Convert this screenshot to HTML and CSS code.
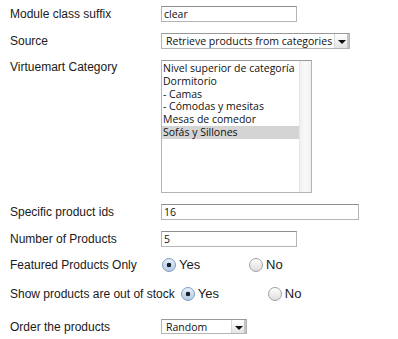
FILE: index.html
```html
<!DOCTYPE html>
<html lang="es">
  <head>
    <meta charset="UTF-8" />
    <meta name="viewport" content="width=device-width, initial-scale=1.0" />
    <title>Module parameters</title>
    <link rel="stylesheet" href="styles.css">
  </head>
  <body>
    <form class="params">
      <!-- Module class suffix -->
      <div class="row">
        <label class="key" for="suffix">Module class suffix</label>
        <input id="suffix" type="text" class="text-input short" value="clear" />
      </div>

      <!-- Source -->
      <div class="row">
        <label class="key" for="source">Source</label>
        <div class="select-box source">
          <select id="source">
            <option>Retrieve products from categories</option>
          </select>
          <span class="select-arrow"></span>
        </div>
      </div>

      <!-- Category list -->
      <div class="row row-top">
        <label class="key">Virtuemart Category</label>
        <div class="listbox">
          <ul class="list-items">
            <li>Nivel superior de categoría</li>
            <li>Dormitorio</li>
            <li>- Camas</li>
            <li>- Cómodas y mesitas</li>
            <li>Mesas de comedor</li>
            <li class="selected">Sofás y Sillones</li>
          </ul>
          <div class="list-track"></div>
        </div>
      </div>

      <div class="row">
        <label class="key" for="ids">Specific product ids</label>
        <input id="ids" type="text" class="text-input long" value="16" />
      </div>

      <div class="row">
        <label class="key" for="count">Number of Products</label>
        <input id="count" type="text" class="text-input short" value="5" />
      </div>

      <!-- Radio groups -->
      <div class="row radios featured">
        <span class="key">Featured Products Only</span>
        <label class="option"><input type="radio" name="featured" checked /> Yes</label>
        <label class="option"><input type="radio" name="featured" /> No</label>
      </div>

      <div class="row radios stock">
        <span class="key">Show products are out of stock</span>
        <label class="option"><input type="radio" name="stock" checked /> Yes</label>
        <label class="option"><input type="radio" name="stock" /> No</label>
      </div>

      <div class="row">
        <label class="key" for="order">Order the products</label>
        <div class="select-box order">
          <select id="order">
            <option>Random</option>
          </select>
          <span class="select-arrow"></span>
        </div>
      </div>
    </form>
  </body>
</html>
```

FILE: styles.css
```css
html,
body {
  margin: 0;
  padding: 0;
  background: #fff;
}

body {
  font-family: "Liberation Sans", Arial, sans-serif;
  font-size: 12px;
  color: #1a1a1a;
}

/* Parameter form */
.params {
  padding: 6px 0 0 10px;
}

.params .row {
  display: flex;
  align-items: center;
  margin-bottom: 11px;
}

.params .row.row-top {
  align-items: flex-start;
}

.params .row.featured {
  margin-bottom: 15px;
}

.params .row.stock {
  margin-bottom: 18px;
}

.params .key {
  min-width: 146px;
  margin-right: 5px;
  line-height: 14px;
}

/* Text fields */
.params .text-input {
  box-sizing: border-box;
  height: 16px;
  margin: 0;
  padding: 0 2px;
  border: 1px solid #b4b4b4;
  border-top-color: #8e8e8e;
  font-family: "Open Sans", "Liberation Sans", sans-serif;
  font-size: 10.5px;
  color: #111;
  outline: none;
}

.params .text-input.short {
  width: 136px;
}

.params .text-input.long {
  width: 198px;
}

/* Drop downs */
.params .select-box {
  position: relative;
  box-sizing: border-box;
  height: 16px;
}

.params .select-box.source {
  width: 189px;
}

.params .select-box.order {
  width: 86px;
  height: 15px;
}

.params .select-box select {
  appearance: none;
  -webkit-appearance: none;
  box-sizing: border-box;
  width: 100%;
  height: 100%;
  margin: 0;
  padding: 0 0 0 4px;
  border: 1px solid #b4b4b4;
  border-top-color: #999;
  border-radius: 0;
  background: #fff;
  font-family: "Open Sans", "Liberation Sans", sans-serif;
  font-size: 10.5px;
  color: #111;
}

.params .select-box .select-arrow {
  position: absolute;
  top: 1px;
  right: 1px;
  bottom: 1px;
  width: 14px;
  border-left: 1px solid #d8d8d8;
  background: linear-gradient(#fff, #e4e4e4);
  box-shadow: inset -2px 0 0 #c4c4c4;
}

.params .select-box .select-arrow::after {
  content: "";
  position: absolute;
  top: 50%;
  left: 3px;
  margin-top: -1px;
  border-left: 4px solid transparent;
  border-right: 4px solid transparent;
  border-top: 4px solid #111;
}

/* Category list */
.params .listbox {
  display: flex;
  box-sizing: border-box;
  width: 151px;
  height: 133px;
  border: 1px solid #b4b4b4;
  border-top-color: #999;
}

.params .list-items {
  flex: 1;
  margin: 0;
  padding: 1px 0 0 0;
  list-style: none;
  font-family: "Open Sans", "Liberation Sans", sans-serif;
  font-size: 10.5px;
  line-height: 12.8px;
  color: #111;
}

.params .list-items li {
  padding-left: 1px;
  white-space: nowrap;
}

.params .list-items li.selected {
  background: #d4d4d4;
}

.params .list-track {
  width: 11px;
  border-left: 1px solid #e6e6e6;
  background: linear-gradient(90deg, #f0f0f0, #fafafa 50%, #f0f0f0);
}

/* Radio options */
.params .option {
  display: flex;
  align-items: center;
  width: 87px;
  line-height: 14px;
  font-size: 13px;
}

.params .option input {
  appearance: none;
  -webkit-appearance: none;
  box-sizing: border-box;
  width: 14px;
  height: 14px;
  margin: 0 3px 0 1px;
  border: 1px solid #a2a2a2;
  border-radius: 50%;
  background: linear-gradient(#fdfdfd, #dedede);
}

.params .option input:checked {
  border-color: #7f9cc0;
  background:
    radial-gradient(circle, #17202c 0 2px, transparent 2.6px),
    linear-gradient(#e6eef8, #b4cbe6);
}
```
